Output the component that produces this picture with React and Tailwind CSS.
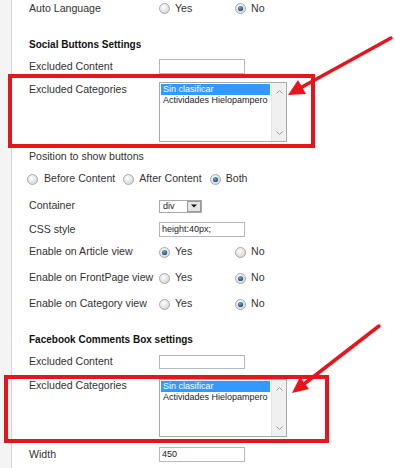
import React from "react";

function Radio({ checked }) {
  return (
    <svg width="11" height="11" viewBox="0 0 11 11" className="shrink-0">
      <defs>
        <radialGradient id="rgrad" cx="40%" cy="35%" r="70%">
          <stop offset="0%" stopColor="#ffffff" />
          <stop offset="100%" stopColor="#d4d4d4" />
        </radialGradient>
        <radialGradient id="rdot" cx="40%" cy="35%" r="70%">
          <stop offset="0%" stopColor="#6aa7d2" />
          <stop offset="100%" stopColor="#1b4a6e" />
        </radialGradient>
      </defs>
      <circle cx="5.5" cy="5.5" r="5" fill="url(#rgrad)" stroke="#a9a9a9" strokeWidth="1" />
      {checked && <circle cx="5.5" cy="5.5" r="2.6" fill="url(#rdot)" />}
    </svg>
  );
}

function YesNo({ yes }) {
  return (
    <div className="flex items-center">
      <div className="flex items-center w-[76px]">
        <Radio checked={yes} />
        <span className="ml-[5px]">Yes</span>
      </div>
      <div className="flex items-center">
        <Radio checked={!yes} />
        <span className="ml-[5px]">No</span>
      </div>
    </div>
  );
}

function TextInput({ value, tall }) {
  return (
    <div
      className={
        tall
          ? "w-[86px] h-[15px] border border-[#b8b8b8] bg-white text-[9px] leading-[13px] pl-[2px] text-[#222]"
          : "w-[86px] h-[14px] border border-[#b8b8b8] bg-white text-[9px] leading-[12px] pl-[2px] text-[#222]"
      }
    >
      {value}
    </div>
  );
}

function ListBox({ short }) {
  return (
    <div
      className={
        short
          ? "w-[128px] h-[58px] border border-[#a9a9a9] bg-white flex"
          : "w-[128px] h-[60px] border border-[#a9a9a9] bg-white flex"
      }
    >
      <div className="flex-1 pt-[1px] pl-[1px] pr-[1px] text-[9px] text-[#222]">
        <div className="h-[11px] leading-[11px] bg-[#3399ff] text-white pl-[2px]">Sin clasificar</div>
        <div className="h-[11px] leading-[11px] pl-[2px]">Actividades Hielopampero</div>
      </div>
      <div className="w-[15px] bg-[#f0f0f0] border-l border-[#e4e4e4] flex flex-col items-center justify-between pt-[7px] pb-[6px]">
        <svg width="7" height="4" viewBox="0 0 7 4">
          <path d="M0.5 3.5 L3.5 0.5 L6.5 3.5" fill="none" stroke="#9a9a9a" strokeWidth="1" />
        </svg>
        <svg width="7" height="4" viewBox="0 0 7 4">
          <path d="M0.5 0.5 L3.5 3.5 L6.5 0.5" fill="none" stroke="#9a9a9a" strokeWidth="1" />
        </svg>
      </div>
    </div>
  );
}

function Label({ children }) {
  return <div className="w-[130px] shrink-0 whitespace-nowrap">{children}</div>;
}

export default function App() {
  return (
    <div
      className="relative w-[395px] h-[468px] overflow-hidden bg-white flex text-[10.6px] text-[#333]"
      style={{ fontFamily: '"Liberation Sans", Arial, sans-serif' }}
    >
      <div className="w-[12px] shrink-0 bg-[#f4f4f4] border-r border-[#d6d6d6]" />
      <div className="flex flex-col pl-[17px]">
        <div className="flex items-center h-[18px]">
          <Label>Auto Language</Label>
          <YesNo yes={false} />
        </div>

        <div className="mt-[17px] h-[18px] flex items-center font-bold text-[10px] text-[#111]">
          Social Buttons Settings
        </div>

        <div className="mt-[6px] h-[15px] flex items-center">
          <Label>Excluded Content</Label>
          <TextInput tall />
        </div>

        <div className="relative mt-[8px] flex items-start">
          <div className="absolute left-[-21px] top-[-8px] w-[307px] h-[74px] border-[4px] border-[#e8141b]" />
          <div className="w-[130px] shrink-0 leading-[14px]">Excluded Categories</div>
          <ListBox />
        </div>

        <div className="mt-[8px] h-[14px] flex items-center">Position to show buttons</div>

        <div className="mt-[8px] h-[14px] flex items-center ml-[-2px]">
          <Radio />
          <span className="ml-[6px]">Before Content</span>
          <span className="ml-[8px]"><Radio /></span>
          <span className="ml-[5px]">After Content</span>
          <span className="ml-[8px]"><Radio checked /></span>
          <span className="ml-[5px]">Both</span>
        </div>

        <div className="mt-[13px] h-[14px] flex items-center">
          <Label>Container</Label>
          <div className="w-[43px] h-[13px] border border-[#a9a9a9] bg-white flex items-center">
            <div className="flex-1 text-[9px] leading-[11px] pl-[3px] text-[#222]">div</div>
            <div className="w-[14px] h-[11px] mr-[0px] bg-[#e6e6e6] border border-[#9a9a9a] flex items-center justify-center">
              <svg width="6" height="4" viewBox="0 0 6 4">
                <path d="M0 0.5 L6 0.5 L3 3.5 Z" fill="#111" />
              </svg>
            </div>
          </div>
        </div>

        <div className="mt-[9px] h-[15px] flex items-center">
          <Label>CSS style</Label>
          <TextInput tall value="height:40px;" />
        </div>

        <div className="mt-[8px] h-[14px] flex items-center">
          <Label>Enable on Article view</Label>
          <YesNo yes={true} />
        </div>

        <div className="mt-[12px] h-[14px] flex items-center">
          <Label>Enable on FrontPage view</Label>
          <YesNo yes={false} />
        </div>

        <div className="mt-[12px] h-[14px] flex items-center">
          <Label>Enable on Category view</Label>
          <YesNo yes={false} />
        </div>

        <div className="mt-[21px] h-[14px] flex items-center font-bold text-[10px] text-[#111]">
          Facebook Comments Box settings
        </div>

        <div className="mt-[9px] h-[14px] flex items-center">
          <Label>Excluded Content</Label>
          <TextInput />
        </div>

        <div className="relative mt-[10px] flex items-start">
          <div className="absolute left-[-25px] top-[-4px] w-[325px] h-[68px] border-[4px] border-[#e8141b]" />
          <div className="w-[130px] shrink-0 leading-[13px]">Excluded Categories</div>
          <ListBox short />
        </div>

        <div className="mt-[10px] h-[15px] flex items-center">
          <Label>Width</Label>
          <TextInput tall value="450" />
        </div>
      </div>

      <svg
        className="absolute left-0 top-0 pointer-events-none"
        width="395"
        height="468"
        viewBox="0 0 395 468"
      >
        <line x1="391" y1="38" x2="302" y2="87" stroke="#e8141b" strokeWidth="3.5" strokeLinecap="round" />
        <polygon points="288,95 306,94 298,80" fill="#e8141b" />
        <line x1="379" y1="326" x2="304" y2="384" stroke="#e8141b" strokeWidth="3.5" strokeLinecap="round" />
        <polygon points="292,393 309,389 300,377" fill="#e8141b" />
      </svg>
    </div>
  );
}
